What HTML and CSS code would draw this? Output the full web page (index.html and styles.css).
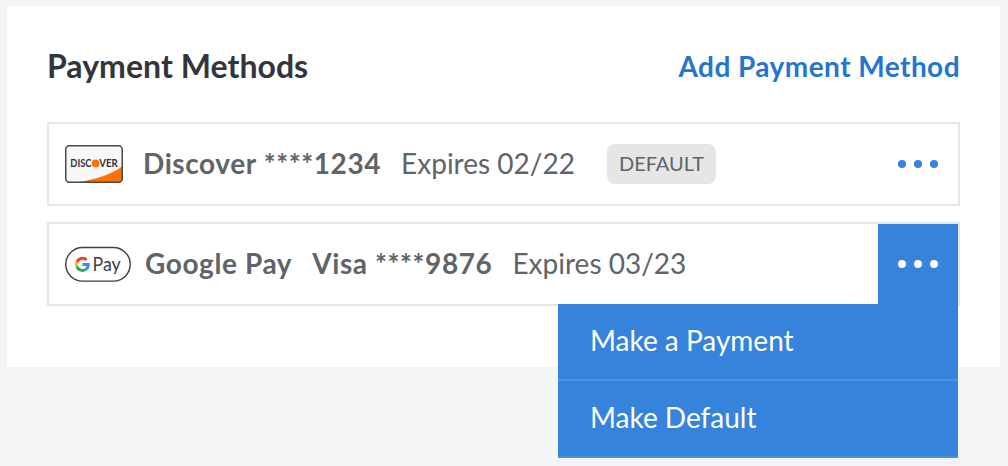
FILE: index.html
```html
<!DOCTYPE html>
<html lang="en">
<head>
<meta charset="utf-8">
<title>Payment Methods</title>
<link rel="stylesheet" href="styles.css">
</head>
<body>
<main class="card">
  <header class="card-header">
    <h1 class="title">Payment Methods</h1>
    <a class="add-link">Add Payment Method</a>
  </header>
  <section class="methods">
    <div class="method">
      <svg class="logo-discover" width="58" height="38" viewBox="0 0 58 38">
        <rect x="1" y="1" width="56" height="36" rx="3.5" fill="#f8f8f8"/>
        <path d="M14 37Q42 32.500 57 21.500V33.500Q57 37 53.500 37Z" fill="#ff7200"/>
        <rect x=".75" y=".75" width="56.500" height="36.500" rx="3.800" fill="none" stroke="#494949" stroke-width="1.500"/>
        <text class="discover-text" x="5.300" y="22.300" textLength="21.200" lengthAdjust="spacingAndGlyphs">DISC</text>
        <circle cx="30.600" cy="18.400" r="3.900" fill="#ff7200"/>
        <text class="discover-text" x="34.200" y="22.300" textLength="18.500" lengthAdjust="spacingAndGlyphs">VER</text>
      </svg>
      <span class="name discover-name">Discover ****1234</span>
      <span class="expires">Expires 02/22</span>
      <span class="badge">DEFAULT</span>
      <button class="more" aria-label="More options"><i class="dot"></i><i class="dot"></i><i class="dot"></i></button>
    </div>
    <div class="method">
      <svg class="logo-gpay" width="66" height="36" viewBox="0 0 66 36">
        <rect x=".75" y="1.500" width="64.500" height="33.600" rx="16.800" fill="#fff" stroke="#3c4043" stroke-width="1.400"/>
        <g transform="translate(9.900 10.800) scale(.315)">
          <path fill="#ea4335" d="M24 9.500c3.540 0 6.710 1.220 9.210 3.600l6.850-6.850C35.900 2.380 30.470 0 24 0 14.620 0 6.510 5.380 2.560 13.220l7.980 6.190C12.430 13.720 17.740 9.500 24 9.500z"/>
          <path fill="#4285f4" d="M46.980 24.550c0-1.570-.15-3.090-.38-4.550H24v9.020h12.940c-.58 2.960-2.260 5.480-4.780 7.180l7.730 6c4.510-4.180 7.090-10.360 7.090-17.650z"/>
          <path fill="#fbbc05" d="M10.530 28.590c-.48-1.450-.76-2.990-.76-4.590s.27-3.140.76-4.590l-7.980-6.190C.92 16.460 0 20.120 0 24c0 3.880.92 7.540 2.560 10.780l7.970-6.190z"/>
          <path fill="#34a853" d="M24 48c6.480 0 11.930-2.130 15.890-5.810l-7.730-6c-2.150 1.450-4.920 2.300-8.160 2.300-6.260 0-11.570-4.220-13.470-9.910l-7.980 6.190C6.510 42.620 14.620 48 24 48z"/>
        </g>
        <text class="gpay-text" x="27.500" y="24.800" textLength="28.200" lengthAdjust="spacingAndGlyphs">Pay</text>
      </svg>
      <span class="name gpay-name">Google Pay</span>
      <span class="name visa-name">Visa ****9876</span>
      <span class="expires">Expires 03/23</span>
      <button class="more more-open" aria-label="More options"><i class="dot"></i><i class="dot"></i><i class="dot"></i></button>
      <div class="menu">
        <a class="menu-item">Make a Payment</a>
        <a class="menu-item">Make Default</a>
      </div>
    </div>
  </section>
</main>
</body>
</html>
```

FILE: styles.css
```css
* { box-sizing: border-box; }
body {
  margin: 0;
  padding: 6px 8px 0 7px;
  height: 466px;
  overflow: hidden;
  background: #f3f4f6;
  font-family: Lato, "Open Sans", sans-serif;
  color: #606469;
}
.card { height: 361px; padding: 40px 40px 0; background: #fff; }
.card-header {
  display: flex;
  justify-content: space-between;
  height: 76px;
  line-height: 40px;
}
.title { margin: 0; font-size: 32px; font-weight: 700; letter-spacing: .04px; color: #32363c; }
.add-link { font-size: 28px; font-weight: 700; letter-spacing: .45px; color: #2575d0; }
.methods { display: flex; flex-direction: column; gap: 16px; }
.method {
  position: relative;
  display: flex;
  align-items: center;
  height: 84px;
  padding-left: 16px;
  border: 2px solid #e6e6e6;
  font-size: 28px;
  line-height: 34px;
  white-space: nowrap;
}
.logo-discover, .logo-gpay { flex: none; }
.discover-text { font: 700 10.7px Lato, sans-serif; fill: #333; }
.gpay-text { font: 400 18.5px Lato, sans-serif; fill: #3c4043; }
.name, .expires { padding-bottom: 2px; }
.name { font-weight: 700; letter-spacing: .6px; }
.discover-name { margin-left: 20px; }
.gpay-name { margin-left: 14px; }
.visa-name { margin-left: 20px; }
.expires { margin-left: 20px; }
.badge {
  height: 40px;
  margin-left: 32px;
  padding: 0 12px;
  border-radius: 8px;
  background: #e6e6e6;
  font-size: 20px;
  line-height: 38px;
}
.more {
  display: flex;
  align-items: center;
  justify-content: center;
  gap: 8px;
  width: 80px;
  height: 80px;
  margin-left: auto;
  padding: 0;
  border: 0;
  background: none;
  color: #3683dc;
}
.more-open { background: #3683dc; color: #fff; }
.dot { width: 8px; height: 8px; border-radius: 50%; background: currentColor; }
.menu {
  position: absolute;
  top: 80px;
  right: 0;
  width: 400px;
  background: #3683dc;
  color: #fff;
}
.menu-item {
  display: block;
  height: 77px;
  padding-left: 32px;
  border-bottom: 2px solid #5090e0;
  line-height: 72px;
}
```
